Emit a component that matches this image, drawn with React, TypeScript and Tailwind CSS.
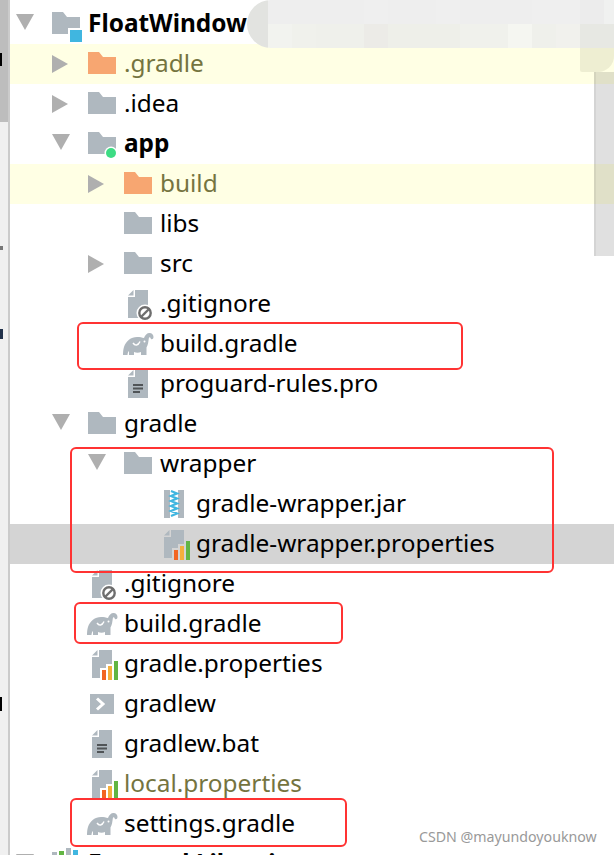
import type { ReactNode } from "react";

const GRAY = "#afb8bf";

function Arrow({ open }: { open?: boolean }) {
  return (
    <svg width="36" height="32" viewBox="0 0 36 32" className="shrink-0">
      {open ? <path d="M0 6H18L9 22Z" fill="#afafaf" /> : <path d="M0 7L16 16L0 25Z" fill="#afafaf" />}
    </svg>
  );
}

function Slot({ children }: { children: ReactNode }) {
  return (
    <svg width="36" height="32" viewBox="0 0 36 32" className="shrink-0 overflow-visible">
      {children}
    </svg>
  );
}

function Folder({ color = GRAY }: { color?: string }) {
  return <path d="M0 4H11L15 9H28V26H0Z" fill={color} />;
}

function ModuleFolder() {
  return (
    <Slot>
      <Folder />
      <rect x="16" y="20" width="14" height="14" fill="#fff" />
      <rect x="18" y="22" width="12" height="12" fill="#40b6e0" />
    </Slot>
  );
}

function AppFolder() {
  return (
    <Slot>
      <Folder />
      <circle cx="23" cy="25" r="6.5" fill="#fff" />
      <circle cx="23" cy="25" r="5" fill="#3ddc84" />
    </Slot>
  );
}

function Page() {
  return (
    <>
      <path d="M11 2H24V30H4V9H11Z" fill={GRAY} />
      <path d="M4 7.5L9.5 2V7.5Z" fill={GRAY} />
    </>
  );
}

function IgnoreFile() {
  return (
    <Slot>
      <Page />
      <circle cx="21" cy="25" r="8.5" fill="#fff" />
      <circle cx="21" cy="25" r="5.7" fill="none" stroke="#6e6e6e" strokeWidth="2.4" />
      <path d="M17 29L25 21" stroke="#6e6e6e" strokeWidth="2.4" />
    </Slot>
  );
}

function TextFile() {
  return (
    <Slot>
      <Page />
      <path d="M9 17H19M9 20.5H19M9 24H16" stroke="#505457" strokeWidth="1.8" />
    </Slot>
  );
}

function PropertiesFile() {
  return (
    <Slot>
      <Page />
      <rect x="12" y="20" width="8" height="12" fill="var(--row-bg, #fff)" />
      <rect x="18" y="16" width="8" height="16" fill="var(--row-bg, #fff)" />
      <rect x="14" y="22" width="4" height="10" fill="#f26522" />
      <rect x="20" y="18" width="4" height="14" fill="#f4af3d" />
      <rect x="26" y="13" width="4" height="19" fill="#62b543" />
    </Slot>
  );
}

function JarFile() {
  return (
    <Slot>
      <rect x="4" y="2" width="20" height="28" fill={GRAY} />
      <rect x="10" y="2" width="8" height="28" fill="#fff" />
      <path
        d="M11 3L17 5.5L11 8L17 10.5L11 13L17 15.5L11 18L17 20.5L11 23L17 25.5L11 28"
        fill="none"
        stroke="#40b6e0"
        strokeWidth="2.2"
      />
    </Slot>
  );
}

function Elephant() {
  return (
    <Slot>
      <path
        d="M-1 27C-1 27 -1 22 0 19C2 13 7 9 13 9C16 9 18 9.5 20 10C21 7 23 5 25.5 5C28 5 29.5 7 29.5 9C29.5 11.5 27 12 26.5 10C26.2 9 25 9 24.8 10.5C24.3 14 24 17 22.5 19.5V27H17V24C15 25 12 25 10 24V27H5V23C4 24 3.5 25.5 3.5 27Z"
        fill={GRAY}
      />
      <path d="M9 15C11 18 14 18 16 13.5" fill="none" stroke="#fff" strokeWidth="1.4" />
      <circle cx="20.5" cy="13.5" r="1" fill="#fff" />
    </Slot>
  );
}

function Terminal() {
  return (
    <Slot>
      <rect x="2" y="6" width="24" height="20" fill={GRAY} />
      <path d="M9 10.5L15 16L9 21.5" fill="none" stroke="#fff" strokeWidth="3" />
    </Slot>
  );
}

function Libraries() {
  return (
    <Slot>
      <rect x="0" y="4" width="5" height="24" fill={GRAY} />
      <rect x="7" y="3" width="5" height="25" fill="#62b543" />
      <rect x="14" y="0" width="5" height="28" fill={GRAY} />
      <rect x="21" y="2" width="5" height="26" fill="#40b6e0" />
    </Slot>
  );
}

type RowProps = {
  label: string;
  icon: ReactNode;
  indent: string;
  arrow?: "open" | "closed";
  tone?: "ignored" | "selected";
  bold?: boolean;
};

function Row({ label, icon, indent, arrow, tone, bold }: RowProps) {
  const bg = tone === "ignored" ? "bg-[#ffffe4]" : tone === "selected" ? "bg-[#d4d4d4] [--row-bg:#d4d4d4]" : "";
  const fg = tone === "ignored" || label === "local.properties" ? "text-[#75743f]" : "text-black";
  return (
    <div className={`flex h-10 items-center whitespace-nowrap ${indent} ${bg}`}>
      {arrow ? <Arrow open={arrow === "open"} /> : <div className="w-9 shrink-0" />}
      {icon}
      <span className={`pb-0.5 ${fg} ${bold ? "font-bold" : ""}`}>{label}</span>
    </div>
  );
}

const D0 = "pl-[6px]";
const D1 = "pl-[42px]";
const D2 = "pl-[78px]";
const D3 = "pl-[114px]";

const mosaicTop = ["#e2e3e0", "#eeeeee", "#eeeeee", "#eeeeee", "#eeeeee", "#efefef", "#eeeeee", "#eeeeee", "#efefef", "#eeeeee", "#eeeeee", "#eeeeee", "#efefef", "#efefef", "#ececec", "#f0f1f0", "#e8e8e6"];
const mosaicBottom = ["#e2e3e0", "#f2f3ef", "#f0f1ec", "#eff0eb", "#eff0eb", "#ecebe7", "#eeefe9", "#eeefe9", "#eeefe9", "#f0f1ec", "#f0f1ec", "#f5f6f1", "#eff0eb", "#f1f1ed", "#e7e8e3", "#e7e8e3", "#e7e8e3"];

export default function App() {
  return (
    <div
      className="relative flex h-[855px] w-[614px] overflow-hidden bg-white text-[24.4px] leading-none"
      style={{ fontFamily: '"Noto Sans", sans-serif' }}
    >
      {/* clipped window behind the tree */}
      <div className="relative w-2 shrink-0 bg-[#f0f0f0]">
        <div className="h-[122px] bg-[#bdbdbd]" />
        <div className="absolute left-0 top-[53px] h-[13px] w-[2px] bg-black" />
        <div className="absolute left-0 top-[246px] h-1 w-[3px] bg-[#777]" />
        <div className="absolute left-0 top-[329px] h-[10px] w-[3px] bg-[#20304a]" />
        <div className="absolute left-0 top-[697px] h-[14px] w-[2px] bg-black" />
      </div>
      <div className="w-[2px] shrink-0 bg-[#cbcbcb]" />

      <div className="min-w-0 flex-1 pt-1">
        <Row label="FloatWindow" indent={D0} arrow="open" icon={<ModuleFolder />} bold />
        <Row label=".gradle" indent={D1} arrow="closed" tone="ignored" icon={<Slot><Folder color="#f7a671" /></Slot>} />
        <Row label=".idea" indent={D1} arrow="closed" icon={<Slot><Folder /></Slot>} />
        <Row label="app" indent={D1} arrow="open" icon={<AppFolder />} bold />
        <Row label="build" indent={D2} arrow="closed" tone="ignored" icon={<Slot><Folder color="#f7a671" /></Slot>} />
        <Row label="libs" indent={D2} icon={<Slot><Folder /></Slot>} />
        <Row label="src" indent={D2} arrow="closed" icon={<Slot><Folder /></Slot>} />
        <Row label=".gitignore" indent={D2} icon={<IgnoreFile />} />
        <Row label="build.gradle" indent={D2} icon={<Elephant />} />
        <Row label="proguard-rules.pro" indent={D2} icon={<TextFile />} />
        <Row label="gradle" indent={D1} arrow="open" icon={<Slot><Folder /></Slot>} />
        <Row label="wrapper" indent={D2} arrow="open" icon={<Slot><Folder /></Slot>} />
        <Row label="gradle-wrapper.jar" indent={D3} icon={<JarFile />} />
        <Row label="gradle-wrapper.properties" indent={D3} tone="selected" icon={<PropertiesFile />} />
        <Row label=".gitignore" indent={D1} icon={<IgnoreFile />} />
        <Row label="build.gradle" indent={D1} icon={<Elephant />} />
        <Row label="gradle.properties" indent={D1} icon={<PropertiesFile />} />
        <Row label="gradlew" indent={D1} icon={<Terminal />} />
        <Row label="gradlew.bat" indent={D1} icon={<TextFile />} />
        <Row label="local.properties" indent={D1} icon={<PropertiesFile />} />
        <Row label="settings.gradle" indent={D1} icon={<Elephant />} />
        <Row label="External Libraries" indent={D0} arrow="open" icon={<Libraries />} bold />
      </div>

      {/* scrollbar thumb */}
      <div className="absolute right-0 top-[72px] h-[184px] w-5 border-l-2 border-black/5 bg-black/[0.12]" />

      {/* mosaic redaction */}
      <div className="absolute left-[247px] top-0 w-[367px] overflow-hidden rounded-l-[24px]">
        <div className="flex h-6">
          {mosaicTop.map((c, i) => (
            <div key={i} className="h-full w-6 shrink-0 first:w-[21px]" style={{ backgroundColor: c }} />
          ))}
        </div>
        <div className="flex h-6">
          {mosaicBottom.map((c, i) => (
            <div key={i} className="h-full w-6 shrink-0 first:w-[21px]" style={{ backgroundColor: c }} />
          ))}
        </div>
      </div>
      <div className="absolute right-0 top-12 h-6 w-[34px] rounded-bl-[2px] rounded-br-[16px] bg-[#a8a88c]/20" />

      {/* red annotation boxes */}
      <div className="absolute left-[77px] top-[322px] h-[48px] w-[386px] rounded-md border-2 border-[#f33]" />
      <div className="absolute left-[70px] top-[447px] h-[126px] w-[484px] rounded-md border-2 border-[#f33]" />
      <div className="absolute left-[74px] top-[602px] h-[42px] w-[269px] rounded-md border-2 border-[#f33]" />
      <div className="absolute left-[70px] top-[798px] h-[49px] w-[277px] rounded-md border-2 border-[#f33]" />

      <div className="absolute left-[419px] top-[828px] text-[14.2px] leading-[18px] text-[#999]">CSDN @mayundoyouknow</div>
    </div>
  );
}
